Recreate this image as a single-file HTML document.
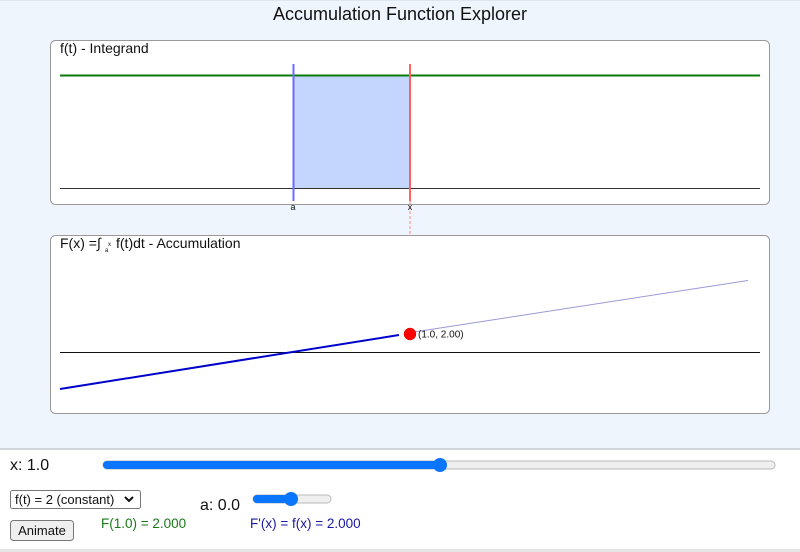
<!DOCTYPE html>
<html><head><meta charset="utf-8"><style>
html,body{margin:0;padding:0;width:800px;height:552px;overflow:hidden;background:#fff;font-family:"Liberation Sans",Arial,sans-serif}
</style></head><body>
<svg width="800" height="552" xmlns="http://www.w3.org/2000/svg" style="display:block;font-family:'Liberation Sans',Arial,sans-serif">
<rect x="0" y="0" width="800" height="449" fill="#eef5fd"/>
<rect x="0" y="0" width="800" height="1" fill="#dfe6ee"/>
<rect x="0" y="448" width="800" height="2" fill="#cfd4d9"/>
<rect x="0" y="549" width="800" height="3" fill="#e6e6e6"/>
<text x="400" y="20" text-anchor="middle" font-size="18" fill="#111">Accumulation Function Explorer</text>

<!-- panel 1 -->
<rect x="50.5" y="40.5" width="719" height="164" rx="5" fill="#fff" stroke="#999"/>
<text x="60" y="53" font-size="14" fill="#111">f(t) - Integrand</text>
<rect x="293" y="75" width="117" height="113" fill="#c4d6fd"/>
<line x1="60" y1="75.5" x2="760" y2="75.5" stroke="#0a7a0a" stroke-width="2"/>
<line x1="60" y1="188.5" x2="760" y2="188.5" stroke="#333" stroke-width="1"/>
<line x1="293.5" y1="64" x2="293.5" y2="201" stroke="#6b6bff" stroke-width="2"/>
<line x1="410" y1="64" x2="410" y2="201" stroke="#ff6060" stroke-width="2"/>
<line x1="410" y1="201" x2="410" y2="239" stroke="#ffaaaa" stroke-width="1.5" stroke-dasharray="3,2"/>
<text x="293" y="210" text-anchor="middle" font-size="9" fill="#111">a</text>
<text x="410" y="210" text-anchor="middle" font-size="9" fill="#111">x</text>

<!-- panel 2 -->
<rect x="50.5" y="235.5" width="719" height="178" rx="5" fill="#fff" stroke="#999"/>
<text x="60" y="248" font-size="14" fill="#111">F(x) =∫</text>
<text x="108" y="246" font-size="6" fill="#111">x</text>
<text x="105" y="252" font-size="6" fill="#111">a</text>
<text x="116" y="248" font-size="14" fill="#111">f(t)dt - Accumulation</text>
<line x1="60" y1="352.5" x2="760" y2="352.5" stroke="#111" stroke-width="1"/>
<line x1="60" y1="389" x2="399" y2="335" stroke="#0000cc" stroke-width="2"/>
<line x1="414" y1="332" x2="748" y2="280.5" stroke="#9a9ad6" stroke-width="1"/>
<circle cx="410" cy="334" r="6" fill="#ff0000" stroke="#d00" stroke-width="0.5"/>
<text x="418" y="337.5" font-size="10" fill="#111">(1.0, 2.00)</text>

<!-- controls -->
<text x="10" y="470" font-size="16" fill="#111">x: 1.0</text>
<rect x="103" y="461" width="672" height="8" rx="4" fill="#efefef" stroke="#b8b8b8"/>
<rect x="103" y="461" width="337" height="8" rx="4" fill="#0a75ff"/>
<circle cx="440" cy="465" r="7" fill="#0a75ff"/>

<rect x="10.5" y="490.5" width="130" height="18" rx="2" fill="#fff" stroke="#777"/>
<text x="15" y="504" font-size="13" fill="#111">f(t) = 2 (constant)</text>
<path d="M125 497 l4 4 l4 -4" fill="none" stroke="#111" stroke-width="2"/>

<text x="200" y="510" font-size="16" fill="#111">a: 0.0</text>
<rect x="253" y="495" width="78" height="8" rx="4" fill="#efefef" stroke="#b8b8b8"/>
<rect x="253" y="495" width="38" height="8" rx="4" fill="#0a75ff"/>
<circle cx="291" cy="499" r="7" fill="#0a75ff"/>

<rect x="10.5" y="520.5" width="63" height="20" rx="3" fill="#efefef" stroke="#777"/>
<text x="42" y="535" text-anchor="middle" font-size="13" fill="#111">Animate</text>
<text x="101" y="528" font-size="13.5" fill="#1a7a1a">F(1.0) = 2.000</text>
<text x="250" y="528" font-size="13.5" fill="#1a1aa0">F'(x) = f(x) = 2.000</text>
</svg>
</body></html>
